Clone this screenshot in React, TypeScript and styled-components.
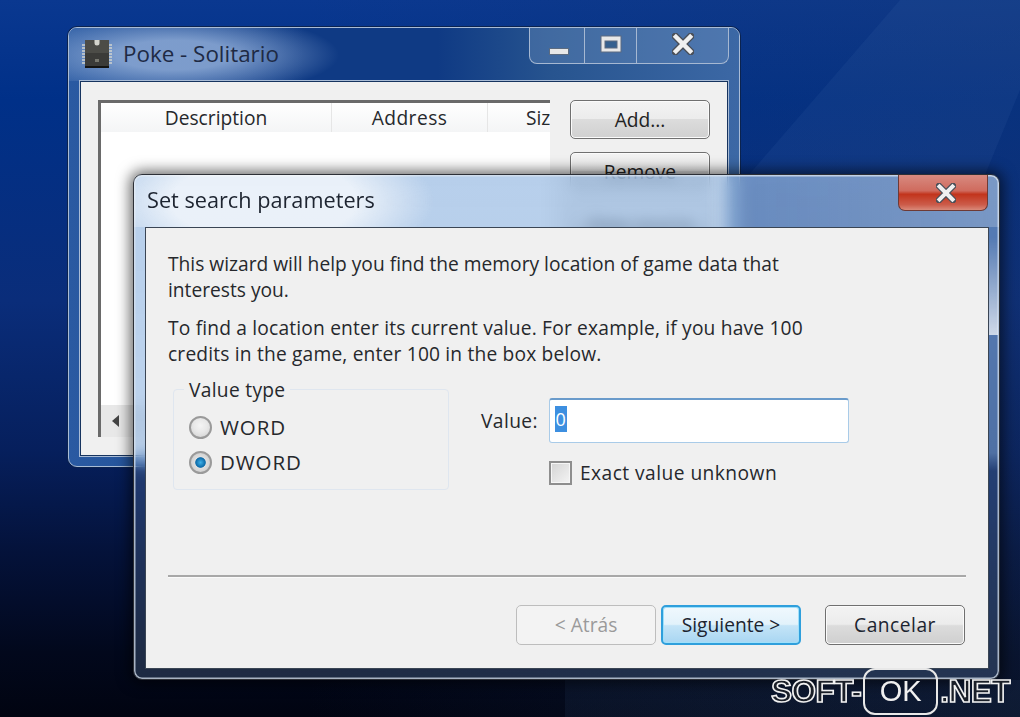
import React from 'react';
import styled, { createGlobalStyle } from 'styled-components';

const GlobalStyle = createGlobalStyle`
  html, body { margin: 0; padding: 0; background: #050f22; }
`;

const ChipIcon = () => (
  <svg width="30" height="30" viewBox="0 0 30 30">
    <g stroke="#d8d8d0" strokeWidth="1.4">
      {[6, 9, 12, 15, 18, 21, 24].map(y => (
        <React.Fragment key={y}>
          <line x1="0" y1={y} x2="4" y2={y} />
          <line x1="26" y1={y} x2="30" y2={y} />
        </React.Fragment>
      ))}
    </g>
    <rect x="3" y="1" width="24" height="27" rx="1.5" fill="#3b3b38" />
    <rect x="3" y="1" width="24" height="13" fill="#4c4c47" />
    <rect x="3" y="27" width="24" height="2" fill="#141412" />
    <path d="M12.5 1 h5 v3 a2.5 2.5 0 0 1 -5 0 Z" fill="#d4d4cc" />
    <rect x="13" y="20" width="4" height="3" fill="#77776e" />
  </svg>
);

const CloseGlyph: React.FC<{ size: number }> = ({ size }) => (
  <svg width={size} height={size} viewBox="0 0 20 20">
    <path
      d="M3 3 L17 17 M17 3 L3 17"
      stroke="#4a4f58"
      strokeWidth="6.5"
      strokeLinecap="square"
      fill="none"
    />
    <path
      d="M3.5 3.5 L16.5 16.5 M16.5 3.5 L3.5 16.5"
      stroke="#f0f0f0"
      strokeWidth="4"
      strokeLinecap="square"
      fill="none"
    />
  </svg>
);

const MaximizeGlyph = () => (
  <svg width="22" height="18" viewBox="0 0 22 18">
    <rect x="1" y="1" width="20" height="16" fill="#e8e8e8" stroke="#5c6b80" strokeWidth="1" />
    <rect x="5" y="6" width="12" height="7" fill="#35608f" stroke="#5c6b80" strokeWidth="1" />
  </svg>
);

const ArrowLeft = () => (
  <svg width="10" height="14" viewBox="0 0 10 14">
    <path d="M8 1 L1 7 L8 13 Z" fill="#444" />
  </svg>
);

export default function App() {
  return (
    <>
      <GlobalStyle />
      <Desktop>
        <Wallpaper />
        <Streak />
        <BackWindow>
          <BackTitleBar>
            <ChipIcon />
            <BackTitle>Poke - Solitario</BackTitle>
            <CaptionGroup>
              <CaptionButton width={55}>
                <MinimizeGlyph />
              </CaptionButton>
              <CaptionButton width={52}>
                <MaximizeGlyph />
              </CaptionButton>
              <CaptionButton width={91}>
                <CloseGlyph size={22} />
              </CaptionButton>
            </CaptionGroup>
          </BackTitleBar>
          <BackClient>
            <ListView>
              <ListHeader>
                <HeaderCell width={231}>Description</HeaderCell>
                <HeaderCell width={156}>
                  <Wide>Address</Wide>
                </HeaderCell>
                <HeaderCell width={112}>Size</HeaderCell>
              </ListHeader>
              <ListBody />
              <HScrollBar>
                <ScrollArrow>
                  <ArrowLeft />
                </ScrollArrow>
              </HScrollBar>
            </ListView>
            <SideButtons>
              <PushButton>Add...</PushButton>
              <PushButton>Remove</PushButton>
              <PushButton>View source</PushButton>
            </SideButtons>
          </BackClient>
        </BackWindow>

        <FrontWindow>
          <FrontTitleBar>
            <FrontTitle>Set search parameters</FrontTitle>
            <RedClose>
              <CloseGlyph size={20} />
            </RedClose>
          </FrontTitleBar>
          <FrontClient>
            <Paragraph>
              This wizard will help you find the memory location of game data that
              <br />
              interests you.
            </Paragraph>
            <Paragraph tracking={0.18}>
              To find a location enter its current value. For example, if you have 100
              <br />
              credits in the game, enter 100 in the box below.
            </Paragraph>
            <FormRow>
              <GroupBox>
                <Legend>Value type</Legend>
                <RadioRow>
                  <Radio />
                  <RadioLabel>WORD</RadioLabel>
                </RadioRow>
                <RadioRow>
                  <Radio checked />
                  <RadioLabel>DWORD</RadioLabel>
                </RadioRow>
              </GroupBox>
              <ValueColumn>
                <ValueRow>
                  <span>Value:</span>
                  <TextBox>
                    <Selected>0</Selected>
                  </TextBox>
                </ValueRow>
                <CheckRow>
                  <CheckBox />
                  <Wide>Exact value unknown</Wide>
                </CheckRow>
              </ValueColumn>
            </FormRow>
            <Footer>
              <Divider />
              <FooterButtons>
                <WizardButton kind="disabled">&lt; Atrás</WizardButton>
                <WizardButton kind="focused">Siguiente &gt;</WizardButton>
                <WizardButton kind="normal">Cancelar</WizardButton>
              </FooterButtons>
            </Footer>
          </FrontClient>
        </FrontWindow>

        <Watermark>
          <WatermarkText>SOFT-</WatermarkText>
          <WatermarkBox>OK</WatermarkBox>
          <WatermarkText>.NET</WatermarkText>
        </Watermark>
      </Desktop>
    </>
  );
}

const UI_FONT = `"Open Sans", "Noto Sans", sans-serif`;

const Desktop = styled.div`
  position: relative;
  width: 1020px;
  height: 717px;
  overflow: hidden;
  font-family: ${UI_FONT};
  font-size: 19.2px;
  color: #26282c;
  filter: blur(0.6px);
`;

const Wallpaper = styled.div`
  position: absolute;
  inset: 0;
  background:
    linear-gradient(90deg, transparent 565px, rgba(45, 75, 115, 0.14) 565px) bottom / 100% 37px no-repeat,
    linear-gradient(90deg, transparent 30%, rgba(30, 55, 100, 0.28) 100%),
    linear-gradient(180deg, #0a3890 0%, #003088 14%, #0a2d7a 42%, #061f5c 63%, #04123a 77%, #02081c 91%, #010411 100%);
`;

const Streak = styled.div`
  position: absolute;
  inset: 0;
  clip-path: polygon(740px 185px, 900px 0, 1020px 0, 1020px 90px, 985px 175px);
  background: rgba(110, 150, 215, 0.07);
`;

const Wide = styled.span`
  letter-spacing: 0.45px;
`;

const BackWindow = styled.div`
  position: absolute;
  left: 68px;
  top: 27px;
  width: 672px;
  height: 440px;
  box-sizing: border-box;
  border: 1px solid #a9bcd6;
  border-radius: 9px;
  background: linear-gradient(90deg, #2a5aa2 0%, #1c4a8e 30%, #2f5e9e 80%, #3c68a5 100%);
  box-shadow: 0 0 0 1px #0b234f;
  display: flex;
  flex-direction: column;
`;

const BackTitleBar = styled.div`
  height: 53px;
  flex: none;
  display: flex;
  align-items: center;
  padding: 0 10px 2px 13px;
  box-sizing: border-box;
  background:
    radial-gradient(ellipse 165px 42px at 105px 27px, rgba(135, 165, 210, 0.9) 35%, transparent 100%),
    linear-gradient(90deg, #2a5aa2 0%, #0f3a84 35%, #0f3a84 55%, #27548f 72%, #3c68a5 100%);
  border-radius: 8px 8px 0 0;
`;

const BackTitle = styled.div`
  margin-left: 11px;
  font-size: 22.4px;
  color: #1e2a44;
`;

const CaptionGroup = styled.div`
  margin-left: auto;
  align-self: flex-start;
  display: flex;
  height: 36px;
  box-sizing: border-box;
  border: 1px solid #a6b8d2;
  border-top: none;
  border-radius: 0 0 8px 8px;
  overflow: hidden;
  background: rgba(115, 150, 195, 0.35);
`;

const CaptionButton = styled.div<{ width: number }>`
  width: ${p => p.width}px;
  display: flex;
  align-items: center;
  justify-content: center;
  padding-bottom: 4px;
  box-sizing: border-box;
  border-right: 1px solid #a6b8d2;

  &:last-child {
    border-right: none;
  }
`;

const MinimizeGlyph = styled.div`
  width: 20px;
  height: 7px;
  margin: 15px 0 0 4px;
  background: #e8e8e8;
  border: 1px solid #5c6b80;
  box-sizing: border-box;
`;

const BackClient = styled.div`
  flex: 1;
  margin: 0 11px 11px;
  box-sizing: border-box;
  border: 1px solid #17345f;
  outline: 1px solid #a9bcd6;
  background: #f0f0f0;
  display: flex;
  padding: 18px 17px;
  gap: 20px;
`;

const ListView = styled.div`
  width: 452px;
  height: 337px;
  flex: none;
  box-sizing: border-box;
  border: 3px solid #6a6a6a;
  border-right: none;
  border-bottom: none;
  background: #fff;
  display: flex;
  flex-direction: column;
`;

const ListHeader = styled.div`
  height: 29px;
  flex: none;
  display: flex;
  overflow: hidden;
  background: linear-gradient(180deg, #ffffff, #f4f5f6);
`;

const HeaderCell = styled.div<{ width: number }>`
  width: ${p => p.width}px;
  flex: none;
  box-sizing: border-box;
  text-align: center;
  line-height: 29px;
  white-space: nowrap;
  border-right: 1px solid #e6e6e6;
`;

const ListBody = styled.div`
  flex: 1;
`;

const HScrollBar = styled.div`
  height: 32px;
  flex: none;
  background: #e8e8e8;
  display: flex;
  align-items: center;
`;

const ScrollArrow = styled.div`
  width: 30px;
  display: flex;
  justify-content: center;
`;

const SideButtons = styled.div`
  display: flex;
  flex-direction: column;
  gap: 13px;
`;

const PushButton = styled.div`
  width: 140px;
  height: 39px;
  box-sizing: border-box;
  border: 1.5px solid #707070;
  border-radius: 5px;
  box-shadow: inset 0 0 0 1px #fbfbfb;
  background: linear-gradient(180deg, #f3f3f3 0%, #ececec 48%, #dcdcdc 50%, #d0d0d0 100%);
  display: flex;
  align-items: center;
  justify-content: center;
  white-space: nowrap;
  color: #222;
`;

const FrontWindow = styled.div`
  position: absolute;
  left: 133px;
  top: 174px;
  width: 867px;
  height: 506px;
  box-sizing: border-box;
  border: 1.5px solid #2c2f36;
  border-radius: 9px;
  background: linear-gradient(180deg, rgba(135, 175, 222, 0.6) 0, rgba(135, 175, 222, 0.55) 278px, rgba(135, 175, 222, 0.2) 296px, rgba(135, 175, 222, 0.22) 100%);
  backdrop-filter: blur(7px);
  box-shadow: 0 0 14px 3px rgba(0, 0, 0, 0.6), inset 0 0 0 1.5px rgba(215, 225, 238, 0.75);
  display: flex;
  flex-direction: column;

  &::after {
    content: '';
    position: absolute;
    right: 1px;
    top: 62px;
    width: 9px;
    height: 98px;
    background: linear-gradient(180deg, rgba(255, 255, 255, 0), rgba(255, 255, 255, 0.72));
  }
`;

const FrontTitleBar = styled.div`
  height: 52px;
  flex: none;
  display: flex;
  align-items: flex-start;
  padding-right: 10px;
  border-radius: 8px 8px 0 0;
  background:
    radial-gradient(ellipse 170px 70px at 130px 26px, rgba(255, 255, 255, 0.7) 55%, transparent 100%),
    linear-gradient(90deg, transparent 66%, rgba(255, 255, 255, 0.12) 70%, rgba(255, 255, 255, 0.22) 100%);
`;

const FrontTitle = styled.div`
  margin: 10px 0 0 13px;
  font-size: 21.7px;
  color: #1d2430;
`;

const RedClose = styled.div`
  margin-left: auto;
  width: 90px;
  height: 36px;
  box-sizing: border-box;
  border: 1px solid #6e3a35;
  border-top: none;
  border-radius: 0 0 7px 7px;
  background: linear-gradient(180deg, #d88a80 0%, #cf6b5e 45%, #c2341c 55%, #cc5c4a 85%, #d98a7a 100%);
  display: flex;
  align-items: center;
  justify-content: center;
  margin-right: 1px;
  padding-left: 6px;
`;

const FrontClient = styled.div`
  flex: 1;
  margin: 0 10px 10px 11px;
  box-sizing: border-box;
  border: 1.5px solid #3a4554;
  background: #f0f0f0;
  padding: 23px 22px 23px;
  display: flex;
  flex-direction: column;
  line-height: 26px;
`;

const Paragraph = styled.div<{ tracking?: number }>`
  margin-bottom: 12px;
  letter-spacing: ${p => p.tracking ?? 0}px;
`;

const FormRow = styled.div`
  display: flex;
  margin-top: 10px;
  padding-left: 5px;
`;

const GroupBox = styled.div`
  position: relative;
  width: 276px;
  height: 101px;
  box-sizing: border-box;
  border: 1.5px solid #dfe6ef;
  border-radius: 4px;
  padding: 24px 15px 0;
  display: flex;
  flex-direction: column;
  gap: 9px;
`;

const Legend = styled.div`
  position: absolute;
  left: 10px;
  top: -13px;
  padding: 0 5px;
  letter-spacing: 0.3px;
  background: #f0f0f0;
`;

const RadioRow = styled.div`
  display: flex;
  align-items: center;
  gap: 8px;
`;

const RadioLabel = styled.span`
  font-size: 20.5px;
  letter-spacing: 0.9px;
`;

const Radio = styled.div<{ checked?: boolean }>`
  width: 23px;
  height: 23px;
  box-sizing: border-box;
  border-radius: 50%;
  border: 2px solid #9a9a9a;
  background: ${p =>
    p.checked
      ? 'radial-gradient(circle at 50% 50%, #3fb0e8 0, #0c6aa8 36%, #dfdfdf 42%, #c4c4c4 100%)'
      : 'radial-gradient(circle at 50% 40%, #f4f4f4 0, #e8e8e8 45%, #cfcfcf 100%)'};
`;

const ValueColumn = styled.div`
  margin-left: 32px;
  padding-top: 9px;
  display: flex;
  flex-direction: column;
  gap: 17px;
`;

const ValueRow = styled.div`
  display: flex;
  align-items: center;
  gap: 11px;
  letter-spacing: 0.4px;
`;

const TextBox = styled.div`
  width: 300px;
  height: 45px;
  box-sizing: border-box;
  border: 1.5px solid #a9cbe8;
  border-top: 2px solid #6a9bcb;
  border-radius: 3px;
  background: #fff;
  padding: 6px 5px;
  display: flex;
  align-items: flex-start;
`;

const Selected = styled.span`
  display: block;
  width: 12px;
  height: 26px;
  line-height: 26px;
  background: #3d8fe0;
  color: #fff;
  font-size: 18px;
  text-align: center;
`;

const CheckRow = styled.div`
  display: flex;
  align-items: center;
  gap: 8px;
  margin-left: 68px;
`;

const CheckBox = styled.div`
  width: 23px;
  height: 24px;
  box-sizing: border-box;
  border: 2px solid #8e8e8e;
  box-shadow: inset 0 0 0 1px #f6f6f6;
  background: linear-gradient(135deg, #d4d4d4, #f4f4f4);
`;

const Footer = styled.div`
  margin-top: auto;
  display: flex;
  flex-direction: column;
  gap: 27px;
`;

const Divider = styled.div`
  height: 2px;
  background: #a8a8a8;
  border-bottom: 1px solid #fafafa;
`;

const FooterButtons = styled.div`
  display: flex;
  justify-content: flex-end;
  gap: 5px;
  padding-right: 1px;
`;

const WizardButton = styled.div<{ kind: 'disabled' | 'focused' | 'normal' }>`
  width: 140px;
  height: 40px;
  box-sizing: border-box;
  border-radius: 5px;
  display: flex;
  align-items: center;
  justify-content: center;
  ${p => (p.kind === 'normal' ? 'margin-left: 19px; letter-spacing: 0.5px;' : '')}
  ${p =>
    p.kind === 'disabled'
      ? `
    border: 1.5px solid #bdbdbd;
    background: #f3f3f3;
    color: #9a9a9a;
  `
      : p.kind === 'focused'
        ? `
    border: 2px solid #2f9fdc;
    box-shadow: inset 0 0 0 1px #9fe0fa;
    background: linear-gradient(180deg, #f0f8fd 0%, #e2f2fb 48%, #c4e4f7 52%, #a8d6f2 100%);
    color: #1c2430;
  `
        : `
    border: 1.5px solid #707070;
    box-shadow: inset 0 0 0 1px #fbfbfb;
    background: linear-gradient(180deg, #f3f3f3 0%, #ececec 48%, #dcdcdc 52%, #cfcfcf 100%);
    color: #1c2430;
  `}
`;

const Watermark = styled.div`
  position: absolute;
  right: 10px;
  bottom: 2px;
  display: flex;
  align-items: center;
  font-family: "Liberation Sans", sans-serif;
  font-size: 31.5px;
  height: 47px;
`;

const WatermarkText = styled.span`
  color: #1a1f28;
  -webkit-text-stroke: 1.6px #f2f2f2;
  font-weight: 700;
  letter-spacing: -0.5px;
`;

const WatermarkBox = styled.div`
  width: 75px;
  height: 47px;
  margin: 0 2px;
  box-sizing: border-box;
  border: 2px solid #e8e8e8;
  border-radius: 12px;
  color: #f0f0f0;
  font-size: 29px;
  display: flex;
  align-items: center;
  justify-content: center;
`;
